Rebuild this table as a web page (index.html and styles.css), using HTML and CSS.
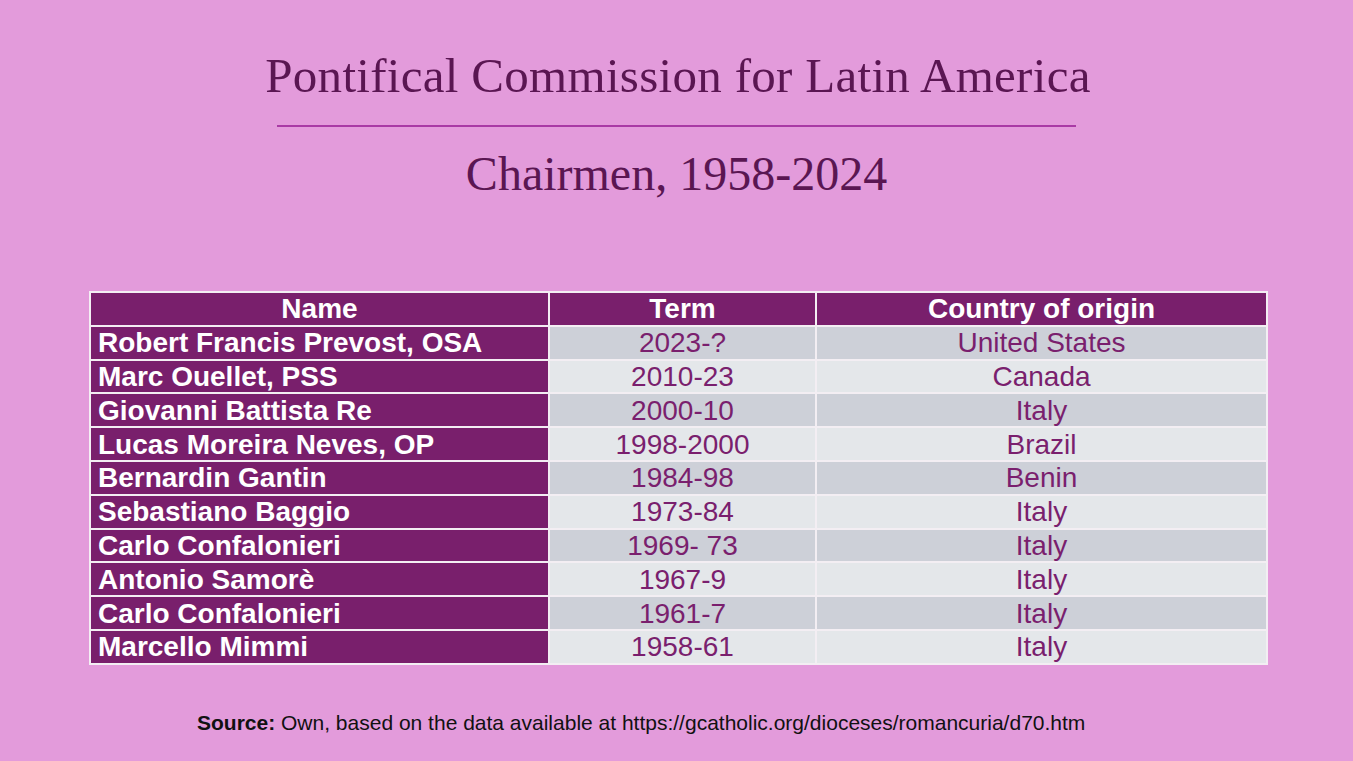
FILE: index.html
```html
<!DOCTYPE html>
<html>
<head>
<meta charset="utf-8">
<link rel="stylesheet" href="styles.css">
</head>
<body>
<div class="slide">
  <h1 class="title">Pontifical Commission for Latin America</h1>
  <div class="rule"></div>
  <h2 class="subtitle">Chairmen, 1958-2024</h2>
  <table class="chairs">
    <colgroup>
      <col class="c-name"><col class="c-term"><col class="c-country">
    </colgroup>
    <thead>
      <tr><th>Name</th><th>Term</th><th>Country of origin</th></tr>
    </thead>
    <tbody>
      <tr class="odd"><td class="name">Robert Francis Prevost, OSA</td><td>2023-?</td><td>United States</td></tr>
      <tr class="even"><td class="name">Marc Ouellet, PSS</td><td>2010-23</td><td>Canada</td></tr>
      <tr class="odd"><td class="name">Giovanni Battista Re</td><td>2000-10</td><td>Italy</td></tr>
      <tr class="even"><td class="name">Lucas Moreira Neves, OP</td><td>1998-2000</td><td>Brazil</td></tr>
      <tr class="odd"><td class="name">Bernardin Gantin</td><td>1984-98</td><td>Benin</td></tr>
      <tr class="even"><td class="name">Sebastiano Baggio</td><td>1973-84</td><td>Italy</td></tr>
      <tr class="odd"><td class="name">Carlo Confalonieri</td><td>1969- 73</td><td>Italy</td></tr>
      <tr class="even"><td class="name">Antonio Samorè</td><td>1967-9</td><td>Italy</td></tr>
      <tr class="odd"><td class="name">Carlo Confalonieri</td><td>1961-7</td><td>Italy</td></tr>
      <tr class="even"><td class="name">Marcello Mimmi</td><td>1958-61</td><td>Italy</td></tr>
    </tbody>
  </table>
  <p class="source"><b>Source:</b> Own, based on the data available at https://gcatholic.org/dioceses/romancuria/d70.htm</p>
</div>
</body>
</html>
```

FILE: styles.css
```css
html, body {
  margin: 0;
  padding: 0;
}
body {
  background: #e39bdb;
  width: 1353px;
  height: 761px;
  overflow: hidden;
}
.slide {
  display: flex;
  flex-direction: column;
  align-items: center;
  padding-top: 51px;
}
.title {
  margin: 0 0 0 3px;
  font-family: "Liberation Serif", serif;
  font-weight: normal;
  font-size: 49px;
  letter-spacing: 0.3px;
  line-height: 50px;
  color: #5a1652;
}
.rule {
  width: 799px;
  height: 2px;
  background: #a93aa5;
  margin-top: 24px;
}
.subtitle {
  margin: 22px 0 0 0;
  font-family: "Liberation Serif", serif;
  font-weight: normal;
  font-size: 48px;
  line-height: 50px;
  color: #5a1652;
}
.chairs {
  align-self: flex-start;
  margin-top: 92px;
  margin-left: 89px;
  width: 1177px;
  border-collapse: collapse;
  table-layout: fixed;
  font-family: "Liberation Sans", Arial, sans-serif;
  font-size: 28px;
}
.c-name { width: 459px; }
.c-term { width: 267px; }
.c-country { width: 451px; }
.chairs th, .chairs td {
  border: 2px solid #f3eef3;
  height: 31.8px;
  padding: 0;
  line-height: 31px;
  text-align: center;
}
.chairs th {
  background: #791f6c;
  color: #ffffff;
  font-weight: bold;
}
.chairs td {
  color: #7a1f6e;
}
.chairs td.name {
  background: #791f6c;
  color: #ffffff;
  font-weight: bold;
  text-align: left;
  padding-left: 7px;
}
.odd td { background: #cdd0d8; }
.even td { background: #e4e7ea; }
.source {
  align-self: flex-start;
  margin: 46px 0 0 197px;
  font-family: "Liberation Sans", Arial, sans-serif;
  font-size: 21px;
  line-height: 24px;
  color: #111111;
}
```
